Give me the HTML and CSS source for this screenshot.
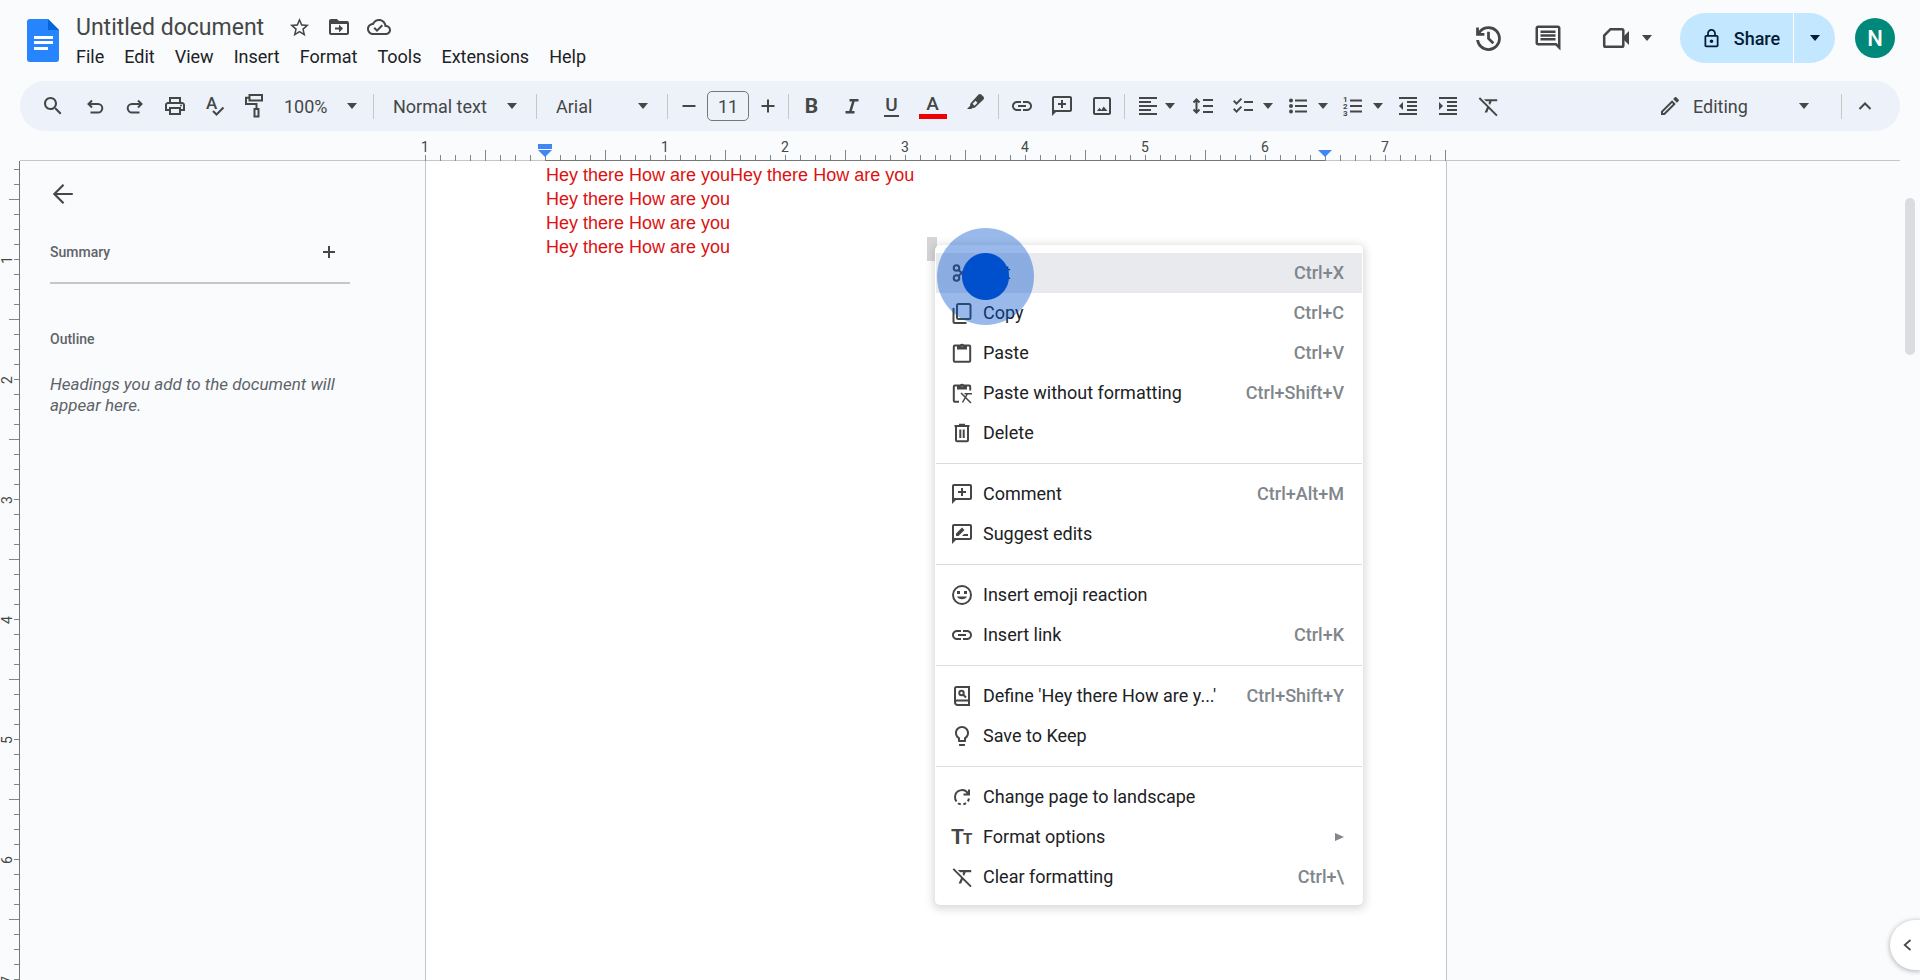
FILE: index.html
```html
<!DOCTYPE html>
<html lang="en">
<head>
  <meta charset="UTF-8">
  <meta name="viewport" content="width=device-width, initial-scale=1.0">
  <title>Untitled document</title>
  <link rel="stylesheet" href="styles.css">
</head>
<body>
  <svg class="defs" aria-hidden="true">
    <symbol id="caret" viewBox="0 0 10 6"><path d="M0 0h10L5 6z"/></symbol>
    <symbol id="comment-add" viewBox="0 0 24 24"><path fill-rule="evenodd" d="M4 2h16c1.1 0 2 .9 2 2v12c0 1.1-.9 2-2 2H6l-4 4V4c0-1.1.9-2 2-2zm0 2v12h16V4zM11 6h2v3h3v2h-3v3h-2v-3H8V9h3z"/></symbol>
    <symbol id="link" viewBox="0 0 24 24"><path d="M3.9 12c0-1.71 1.39-3.1 3.1-3.1h4V7H7c-2.76 0-5 2.24-5 5s2.24 5 5 5h4v-1.9H7c-1.71 0-3.1-1.39-3.1-3.1zM8 13h8v-2H8v2zm9-6h-4v1.9h4c1.71 0 3.1 1.39 3.1 3.1s-1.39 3.1-3.1 3.1h-4V17h4c2.76 0 5-2.24 5-5s-2.24-5-5-5z"/></symbol>
    <symbol id="clear" viewBox="0 0 24 24"><path d="M7.500 4.500H22v2.400h-6l-1.700 4-1.800-1.800.9-2.200h-3.500zM3.300 2.500L22.500 21.700l-1.500 1.500-8.200-8.200-1.700 4H8.300l2.700-5.900L1.800 4z"/></symbol>
  </svg>

  <header class="header">
    <a class="logo" href="#" aria-label="Docs home">
      <svg width="32" height="43" viewBox="0 0 32 43">
        <path d="M3 0h18l11 11v29a3 3 0 0 1-3 3H3a3 3 0 0 1-3-3V3a3 3 0 0 1 3-3z" fill="#2684fc"/>
        <path d="M21 0l11 11H21z" fill="#0066da"/>
        <path d="M7 17h19v3H7zM7 22h19v3H7zM7 28h14v3H7z" fill="#fff"/>
      </svg>
    </a>
    <div class="heading">
      <div class="title-row">
        <h1>Untitled document</h1>
        <button class="title-btn" aria-label="Star"><svg width="23" height="23" viewBox="0 0 24 24"><path d="M22 9.240l-7.190-.620L12 2 9.190 8.630 2 9.240l5.460 4.730L5.820 21 12 17.270 18.180 21l-1.630-7.030L22 9.240zM12 15.400l-3.760 2.270 1-4.280-3.320-2.880 4.380-.38L12 6.100l1.710 4.040 4.380.38-3.320 2.880 1 4.280L12 15.400z"/></svg></button>
        <button class="title-btn" aria-label="Move"><svg width="24" height="24" viewBox="0 0 24 24"><path fill-rule="evenodd" d="M20 6h-8l-2-2H4c-1.100 0-2 .9-2 2v12c0 1.100.9 2 2 2h16c1.100 0 2-.9 2-2V8c0-1.100-.9-2-2-2zM4 9h16v9H4zM12 17.500l4-4-4-4v3H8v2h4z"/></svg></button>
        <button class="title-btn" aria-label="Document status"><svg width="24" height="24" viewBox="0 0 24 24"><path d="M19.350 10.040C18.670 6.590 15.640 4 12 4 9.110 4 6.610 5.640 5.360 8.040 2.350 8.360 0 10.900 0 14c0 3.310 2.690 6 6 6h13c2.760 0 5-2.240 5-5 0-2.640-2.050-4.780-4.650-4.960zM19 18H6c-2.210 0-4-1.790-4-4 0-2.050 1.530-3.760 3.560-3.970l1.070-.11.5-.95C8.080 7.140 9.940 6 12 6c2.620 0 4.880 1.860 5.390 4.430l.3 1.500 1.530.11c1.560.1 2.780 1.410 2.780 2.960 0 1.650-1.350 3-3 3zm-9-3.820l-2.090-2.090L6.500 13.500 10 17l6.010-6.010-1.410-1.410z"/></svg></button>
      </div>
      <nav class="menubar">
        <button>File</button>
        <button>Edit</button>
        <button>View</button>
        <button>Insert</button>
        <button>Format</button>
        <button>Tools</button>
        <button>Extensions</button>
        <button>Help</button>
      </nav>
    </div>
    <div class="actions">
      <button aria-label="Version history"><svg width="33" height="33" viewBox="0 0 24 24"><path d="M12 21q-3.450 0-6.012-2.287T3.050 13H5.100q.35 2.600 2.313 4.300T12 19q2.925 0 4.963-2.037T19 12t-2.037-4.962T12 5q-1.725 0-3.225.8T6.250 8H9v2H3V4h2v2.350q1.275-1.600 3.113-2.475T12 3q1.875 0 3.513.713t2.850 1.924 1.925 2.850T21 12t-.712 3.513-1.925 2.850-2.850 1.925T12 21m2.800-4.800L11 12.400V7h2v4.600l3.200 3.200z"/></svg></button>
      <button aria-label="Comments"><svg width="30" height="30" viewBox="0 0 24 24"><path d="M21.990 4c0-1.100-.89-2-1.990-2H4c-1.100 0-2 .9-2 2v12c0 1.100.9 2 2 2h14l4 4-.01-18zM20 4v13.170L18.830 16H4V4h16zM6 12h12v2H6zm0-3h12v2H6zm0-3h12v2H6z"/></svg></button>
      <button class="meet" aria-label="Join a call"><svg width="28" height="24" viewBox="0 0 28 24"><path d="M8.500 3.200H20a1.300 1.300 0 0 1 1.300 1.300v15a1.300 1.300 0 0 1-1.300 1.300H3.500a1.300 1.300 0 0 1-1.300-1.300V9.500z" fill="none" stroke="currentColor" stroke-width="2.500"/><path d="M21 11l6-6v14l-6-6z"/></svg><svg class="caret" width="10" height="6"><use href="#caret"/></svg></button>
      <div class="share">
        <button class="share-main"><svg width="21" height="21" viewBox="0 0 24 24"><path d="M18 8h-1V6c0-2.760-2.240-5-5-5S7 3.240 7 6v2H6c-1.100 0-2 .9-2 2v10c0 1.100.9 2 2 2h12c1.100 0 2-.9 2-2V10c0-1.100-.9-2-2-2zM9 6c0-1.660 1.340-3 3-3s3 1.340 3 3v2H9V6zm9 14H6V10h12v10zm-6-3c1.100 0 2-.9 2-2s-.9-2-2-2-2 .9-2 2 .9 2 2 2z"/></svg>Share</button>
        <button class="share-more" aria-label="Quick sharing actions"><svg class="caret" width="10" height="6"><use href="#caret"/></svg></button>
      </div>
      <button class="avatar" aria-label="Account">N</button>
    </div>
  </header>

  <div class="toolbar" role="toolbar">
    <button class="btn btn-search" aria-label="Search the menus"><svg width="24" height="24" viewBox="0 0 24 24"><path d="M15.500 14h-.79l-.28-.27C15.410 12.590 16 11.110 16 9.500 16 5.910 13.090 3 9.500 3S3 5.910 3 9.500 5.910 16 9.500 16c1.610 0 3.090-.59 4.230-1.570l.27.28v.79l5 4.990L20.490 19l-4.990-5zm-6 0C7.010 14 5 11.990 5 9.500S7.010 5 9.500 5 14 7.010 14 9.500 11.990 14 9.500 14z"/></svg></button>
    <button class="btn" aria-label="Undo"><svg class="line-icon" width="24" height="24" viewBox="0 0 24 24"><path d="M9 6.500L5.500 10 9 13.500M6 10h9a4.300 4.300 0 0 1 0 8.600H7.500"/></svg></button>
    <button class="btn" aria-label="Redo"><svg class="line-icon" width="24" height="24" viewBox="0 0 24 24"><path d="M15 6.500l3.500 3.500-3.500 3.500M18 10H9a4.300 4.300 0 0 0 0 8.600h7.500"/></svg></button>
    <button class="btn" aria-label="Print"><svg width="24" height="24" viewBox="0 0 24 24"><path d="M19 8h-1V3H6v5H5c-1.660 0-3 1.340-3 3v6h4v4h12v-4h4v-6c0-1.660-1.340-3-3-3zM8 5h8v3H8V5zm8 12v2H8v-4h8v2zm2-2v-2H6v2H4v-4c0-.55.45-1 1-1h14c.55 0 1 .45 1 1v4h-2z"/><circle cx="18" cy="11.500" r="1"/></svg></button>
    <button class="btn" aria-label="Spelling and grammar check"><svg width="24" height="24" viewBox="0 0 24 24"><text class="icon-text" x="3" y="15" font-size="17">A</text><path class="stroke" d="M10 17l3.500 3.500 7-7"/></svg></button>
    <button class="btn" aria-label="Paint format"><svg class="line-icon" width="24" height="26" viewBox="1 0 24 26"><path d="M7.500 2h12.500v5.500H7.500zM7.500 4.700H4v6.300h10.500v4.500M12.500 16h4v7.500h-4z"/></svg></button>
    <label class="pick pick-zoom"><select aria-label="Zoom"><option>100%</option></select><svg class="caret" width="10" height="6"><use href="#caret"/></svg></label>
    <span class="sep"></span>
    <label class="pick pick-style"><select aria-label="Styles"><option>Normal text</option></select><svg class="caret" width="10" height="6"><use href="#caret"/></svg></label>
    <span class="sep"></span>
    <label class="pick pick-font"><select aria-label="Font"><option>Arial</option></select><svg class="caret" width="10" height="6"><use href="#caret"/></svg></label>
    <span class="sep"></span>
    <button class="btn btn-step" aria-label="Decrease font size"><svg class="line-icon" width="24" height="24" viewBox="0 0 24 24"><path d="M5.500 12h13"/></svg></button>
    <input class="font-size" type="text" value="11" aria-label="Font size">
    <button class="btn btn-step" aria-label="Increase font size"><svg class="line-icon" width="24" height="24" viewBox="0 0 24 24"><path d="M5.500 12h13M12 5.500v13"/></svg></button>
    <span class="sep"></span>
    <button class="btn bold" aria-label="Bold">B</button>
    <button class="btn" aria-label="Italic"><svg width="24" height="24" viewBox="0 0 24 24"><path class="stroke italic" d="M9.500 6.300h9M5.500 18.300h9M13.800 6l-3.600 12"/></svg></button>
    <button class="btn" aria-label="Underline"><span class="underline">U</span></button>
    <button class="btn btn-color" aria-label="Text color"><span class="text-color">A</span></button>
    <button class="btn btn-color" aria-label="Highlight color"><svg class="marker" width="24" height="24" viewBox="0 0 24 24"><path fill-rule="evenodd" d="M15.500 3.500q1.500-1 2.800 0l2.200 2.200q1.200 1.300 0 2.800L12 16.500q-1 .8-2.200.3L8.300 18H4l3.300-3.400q-.5-1.300.4-2.300zM9.500 12.700l2 2 3-2.900-2-2z"/></svg></button>
    <span class="sep"></span>
    <button class="btn" aria-label="Insert link"><svg width="24" height="24"><use href="#link"/></svg></button>
    <button class="btn" aria-label="Add comment"><svg width="24" height="24"><use href="#comment-add"/></svg></button>
    <button class="btn" aria-label="Insert image"><svg width="24" height="24" viewBox="0 0 24 24"><path d="M19 5v14H5V5h14m0-2H5c-1.100 0-2 .9-2 2v14c0 1.100.9 2 2 2h14c1.100 0 2-.9 2-2V5c0-1.100-.9-2-2-2zM7 17l2.500-3.200 1.800 2.200 2.400-3.500L17.500 17z"/></svg></button>
    <span class="sep"></span>
    <button class="btn btn-split" aria-label="Align"><svg width="24" height="24" viewBox="0 0 24 24"><path d="M15 15H3v2h12v-2zm0-8H3v2h12V7zM3 13h18v-2H3v2zm0 8h18v-2H3v2zM3 3v2h18V3H3z"/></svg><svg class="caret" width="10" height="6"><use href="#caret"/></svg></button>
    <button class="btn" aria-label="Line spacing"><svg width="24" height="24" viewBox="0 0 24 24"><path class="stroke" d="M5.500 6v12M2.500 8.500l3-3 3 3M2.500 15.500l3 3 3-3"/><path d="M12 5v2h10V5zM12 19h10v-2H12zM12 13h10v-2H12z"/></svg></button>
    <button class="btn btn-split btn-list" aria-label="Checklist"><svg width="24" height="24" viewBox="0 0 24 24"><path d="M22 7h-9v2h9V7zm0 8h-9v2h9v-2zM5.540 11L2 7.460l1.410-1.410 2.120 2.120 4.240-4.240 1.410 1.410L5.540 11zm0 8L2 15.460l1.410-1.410 2.120 2.120 4.240-4.240 1.410 1.410L5.540 19z"/></svg><svg class="caret" width="10" height="6"><use href="#caret"/></svg></button>
    <button class="btn btn-split btn-list" aria-label="Bulleted list"><svg width="24" height="24" viewBox="0 0 24 24"><circle cx="5" cy="6.500" r="2"/><circle cx="5" cy="12" r="2"/><circle cx="5" cy="17.500" r="2"/><path d="M9 5.500h12v2H9zM9 11h12v2H9zM9 16.500h12v2H9z"/></svg><svg class="caret" width="10" height="6"><use href="#caret"/></svg></button>
    <button class="btn btn-split btn-list" aria-label="Numbered list"><svg width="24" height="24" viewBox="0 0 24 24"><g class="digits"><text x="2" y="8">1</text><text x="2" y="15">2</text><text x="2" y="22">3</text></g><path d="M9 5.500h12v2H9zM9 11h12v2H9zM9 16.500h12v2H9z"/></svg><svg class="caret" width="10" height="6"><use href="#caret"/></svg></button>
    <button class="btn" aria-label="Decrease indent"><svg width="24" height="24" viewBox="0 0 24 24"><path d="M11 17h10v-2H11v2zm-8-5l4 4V8l-4 4zm0 9h18v-2H3v2zM3 3v2h18V3H3zm8 6h10V7H11v2zm0 4h10v-2H11v2z"/></svg></button>
    <button class="btn" aria-label="Increase indent"><svg width="24" height="24" viewBox="0 0 24 24"><path d="M3 21h18v-2H3v2zM3 8v8l4-4-4-4zm8 9h10v-2H11v2zM3 3v2h18V3H3zm8 6h10V7H11v2zm0 4h10v-2H11v2z"/></svg></button>
    <button class="btn" aria-label="Clear formatting"><svg width="22" height="22"><use href="#clear"/></svg></button>
    <label class="pick pick-mode"><svg class="pencil" width="24" height="24" viewBox="0 0 24 24"><path d="M14.060 9.020l.92.92L5.920 19H5v-.92l9.060-9.060M17.660 3c-.25 0-.51.1-.7.29l-1.830 1.830 3.750 3.750 1.830-1.830c.39-.39.39-1.020 0-1.410l-2.340-2.340c-.2-.2-.45-.29-.71-.29zm-3.600 3.190L3 17.250V21h3.750L17.810 9.940l-3.750-3.750z"/></svg><select aria-label="Mode"><option>Editing</option></select><svg class="caret" width="10" height="6"><use href="#caret"/></svg></label>
    <span class="sep"></span>
    <button class="btn" aria-label="Hide the menus"><svg class="line-icon" width="24" height="24" viewBox="0 0 24 24"><path d="M6.500 15l5.500-5.500 5.500 5.500"/></svg></button>
  </div>

  <div class="ruler">
    <div class="scale">
      <div class="numbers"><span>1</span><span></span><span>1</span><span>2</span><span>3</span><span>4</span><span>5</span><span>6</span><span>7</span></div>
      <svg class="indent indent-left" width="14" height="13" viewBox="0 0 14 13"><path d="M0 0h14v5H0zM0 6h14l-7 7z"/></svg>
      <svg class="indent indent-right" width="14" height="7" viewBox="0 0 14 7"><path d="M0 0h14L7 7z"/></svg>
    </div>
  </div>

  <main class="workspace">
    <div class="side-ruler">
      <span>1</span><span>2</span><span>3</span><span>4</span><span>5</span><span>6</span><span>7</span>
    </div>

    <aside class="outline">
      <button class="back" aria-label="Close document outline"><svg class="line-icon" width="26" height="26" viewBox="0 0 24 24"><path d="M21 12H4M12.500 3.500L4 12l8.500 8.500"/></svg></button>
      <div class="summary">
        <h2>Summary</h2>
        <button aria-label="Add summary"><svg width="14" height="14" viewBox="0 0 14 14"><path d="M6 1h2v5h5v2H8v5H6V8H1V6h5z"/></svg></button>
      </div>
      <h2>Outline</h2>
      <p>Headings you add to the document will appear here.</p>
    </aside>

    <article class="page">
      <p>Hey there How are youHey there How are you</p>
      <p>Hey there How are you</p>
      <p>Hey there How are you</p>
      <p>Hey there How are you</p>
      <div class="selection"></div>

      <div class="context-menu" role="menu">
        <button class="item active" role="menuitem"><svg width="24" height="24" viewBox="0 0 24 24"><g class="stroke"><circle cx="6.500" cy="7" r="2.800"/><circle cx="6.500" cy="17" r="2.800"/><path d="M8.500 9l12 11M8.500 15l12-11"/></g></svg><span>Cut</span><kbd>Ctrl+X</kbd></button>
        <button class="item" role="menuitem"><svg width="24" height="24" viewBox="0 0 24 24"><path class="stroke" d="M8.500 3h10.500a1.500 1.500 0 0 1 1.500 1.500v12a1.500 1.500 0 0 1-1.500 1.500H8.500A1.500 1.500 0 0 1 7 16.500v-12A1.500 1.500 0 0 1 8.500 3zM3.500 7v13.500a1.500 1.500 0 0 0 1.500 1.500h11.500"/></svg><span>Copy</span><kbd>Ctrl+C</kbd></button>
        <button class="item" role="menuitem"><svg width="24" height="24" viewBox="0 0 24 24"><path class="stroke" d="M4.800 4.500h14.400a1 1 0 0 1 1 1v14.300a1 1 0 0 1-1 1H4.800a1 1 0 0 1-1-1V5.500a1 1 0 0 1 1-1z"/><path fill-rule="evenodd" d="M7 4h3a2.200 2.200 0 0 1 4 0h3v4.500H7zm5 0a.9.9 0 1 0 .01 0z"/></svg><span>Paste</span><kbd>Ctrl+V</kbd></button>
        <button class="item" role="menuitem"><svg width="24" height="24" viewBox="0 0 24 24"><path class="stroke" d="M20.200 9.500v-4a1 1 0 0 0-1-1H4.800a1 1 0 0 0-1 1v14.300a1 1 0 0 0 1 1H9"/><path fill-rule="evenodd" d="M7 4h3a2.200 2.200 0 0 1 4 0h3v4.500H7zm5 0a.9.9 0 1 0 .01 0z"/><path class="thin" d="M11 12l10 10M14.500 12.800H22M17.300 13l-4.800 8.500"/></svg><span>Paste without formatting</span><kbd>Ctrl+Shift+V</kbd></button>
        <button class="item" role="menuitem"><svg width="24" height="24" viewBox="0 0 24 24"><path class="stroke" d="M4.500 5h15M6 5v14.200a1 1 0 0 0 1 1h10a1 1 0 0 0 1-1V5M10.300 8.500v8.500M13.700 8.500v8.500M9 3.800h6"/></svg><span>Delete</span></button>
        <hr>
        <button class="item" role="menuitem"><svg width="24" height="24"><use href="#comment-add"/></svg><span>Comment</span><kbd>Ctrl+Alt+M</kbd></button>
        <button class="item" role="menuitem"><svg width="24" height="24" viewBox="0 0 24 24"><path fill-rule="evenodd" d="M4 2h16c1.100 0 2 .9 2 2v12c0 1.100-.9 2-2 2H6l-4 4V4c0-1.100.9-2 2-2zm0 2v12h16V4zM6 14v-2.500l6-6L14.500 8l-6 6zM12 14l2-2h4v2z"/></svg><span>Suggest edits</span></button>
        <hr>
        <button class="item" role="menuitem"><svg width="24" height="24" viewBox="0 0 24 24"><circle class="stroke" cx="12" cy="12" r="9"/><path d="M7 8h3v3H7zM14 8h3v3h-3zM7 13.500h10a5.300 4 0 0 1-10 0z"/></svg><span>Insert emoji reaction</span></button>
        <button class="item" role="menuitem"><svg width="24" height="24"><use href="#link"/></svg><span>Insert link</span><kbd>Ctrl+K</kbd></button>
        <hr>
        <button class="item" role="menuitem"><svg width="24" height="24" viewBox="0 0 24 24"><path class="stroke" d="M6.500 3H19v18H7.500A2.500 2.500 0 0 1 5 18.500v-14A1.500 1.500 0 0 1 6.500 3zM5 18.500a2 2 0 0 1 2-2h12"/><circle class="stroke" cx="11.500" cy="9" r="2.200"/><path class="stroke" d="M13 10.500l3 3"/></svg><span>Define 'Hey there How are y...'</span><kbd>Ctrl+Shift+Y</kbd></button>
        <button class="item" role="menuitem"><svg width="24" height="24" viewBox="0 0 24 24"><path d="M9 21c0 .55.45 1 1 1h4c.55 0 1-.45 1-1v-1H9v1zm3-19C8.140 2 5 5.140 5 9c0 2.380 1.190 4.470 3 5.740V17c0 .55.45 1 1 1h6c.55 0 1-.45 1-1v-2.260c1.810-1.270 3-3.360 3-5.740 0-3.860-3.140-7-7-7zm2.850 11.100l-.85.6V16h-4v-2.300l-.85-.6C7.800 12.160 7 10.630 7 9c0-2.760 2.240-5 5-5s5 2.240 5 5c0 1.630-.8 3.160-2.150 4.100z"/></svg><span>Save to Keep</span></button>
        <hr>
        <button class="item" role="menuitem"><svg width="24" height="24" viewBox="0 0 24 24"><path class="stroke" d="M18 8.500A7 7 0 0 0 5 12q0 2.500 1.500 4.500M19 4.500V9.500h-5.500"/><path class="stroke" stroke-dasharray="3 2.500" d="M8 18.200a7 7 0 0 0 11-5.700"/></svg><span>Change page to landscape</span></button>
        <button class="item" role="menuitem"><svg width="24" height="24" viewBox="0 0 24 24"><text class="icon-bold" x="1" y="19" font-size="21">T</text><text class="icon-bold" x="13" y="19" font-size="15">T</text></svg><span>Format options</span><svg class="submenu" width="9" height="8" viewBox="0 0 9 8"><path d="M0 0l9 4-9 4z"/></svg></button>
        <button class="item" role="menuitem"><svg width="24" height="24" viewBox="-1 -1 26 26"><use href="#clear" width="24" height="24"/></svg><span>Clear formatting</span><kbd>Ctrl+\</kbd></button>
      </div>
      <div class="click-ring"></div>
    </article>

    <div class="gutter"><div class="thumb"></div></div>
    <button class="side-toggle" aria-label="Show side panel"><svg class="line-icon" width="20" height="20" viewBox="0 0 24 24"><path d="M15 6l-7 6 7 6"/></svg></button>
  </main>
</body>
</html>
```
FILE: styles.css
```css
* {
  box-sizing: border-box;
}

body {
  margin: 0;
  height: 100vh;
  display: flex;
  flex-direction: column;
  overflow: hidden;
  background: #f9fbfd;
  color: #444746;
  font-family: Roboto, "Open Sans", sans-serif;
  font-size: 18px;
}

h1, h2, p {
  margin: 0;
}

button {
  display: flex;
  align-items: center;
  justify-content: center;
  border: 0;
  padding: 0;
  background: none;
  color: inherit;
  font: inherit;
  cursor: pointer;
}

svg {
  flex: none;
  fill: currentColor;
}

.defs {
  position: absolute;
  width: 0;
  height: 0;
}

.line-icon,
.stroke {
  fill: none;
  stroke: currentColor;
  stroke-width: 2;
}

.thin {
  fill: none;
  stroke: currentColor;
  stroke-width: 1.5;
}

.italic {
  stroke-width: 2.6;
}

.icon-text {
  font-weight: 500;
}

.icon-bold {
  font-weight: 700;
}

.digits {
  font-size: 8px;
  font-weight: 700;
}

/* header */
.header {
  flex: none;
  display: flex;
  height: 81px;
}

.logo {
  margin: 19px 17px 0 27px;
}

.heading {
  padding-top: 11px;
}

.title-row {
  display: flex;
  align-items: center;
  height: 32px;
}

h1 {
  margin-right: 15px;
  font-size: 23px;
  font-weight: 400;
}

.title-btn {
  width: 40px;
  height: 32px;
}

.menubar {
  display: flex;
  gap: 20px;
  height: 27px;
  color: #202124;
}

.actions {
  display: flex;
  align-items: center;
  gap: 28px;
  height: 76px;
  margin-left: auto;
  padding-right: 25px;
}

.meet {
  gap: 12px;
  margin-left: 11px;
}

.share {
  display: flex;
  height: 50px;
  border-radius: 25px;
  overflow: hidden;
  background: #c2e7ff;
  color: #001d35;
  font-weight: 500;
}

.share-main {
  width: 113px;
  gap: 12px;
  padding-left: 8px;
}

.share-more {
  width: 42px;
  border-left: 1px solid #fff;
}

.avatar {
  width: 40px;
  height: 40px;
  margin-left: -8px;
  border-radius: 50%;
  background: #00897b;
  color: #fff;
  font-size: 22px;
  font-weight: 500;
}

/* toolbar */
.toolbar {
  flex: none;
  display: flex;
  align-items: center;
  gap: 1px;
  height: 50px;
  margin: 0 20px;
  padding: 0 16px 0 12px;
  border-radius: 25px;
  background: #edf2fa;
}

.btn {
  flex: none;
  width: 39px;
  height: 36px;
}

.btn-search {
  width: 42px;
}

.btn-step {
  width: 35px;
}

.btn-color {
  width: 41px;
}

.btn-split {
  width: 54px;
  gap: 5px;
  justify-content: flex-start;
  padding-left: 8px;
}

.btn-list {
  gap: 8px;
}

.bold {
  font-size: 21px;
  font-weight: 700;
}

.underline {
  width: 15px;
  border-bottom: 2px solid;
  font-size: 19px;
  font-weight: 500;
  line-height: 20px;
}

.text-color {
  width: 28px;
  border-bottom: 5px solid #f00000;
  font-size: 19px;
  font-weight: 500;
  line-height: 21px;
}

.marker {
  margin-bottom: 6px;
}

.sep {
  flex: none;
  width: 1px;
  height: 25px;
  margin: 0 2px;
  background: #c7c7c7;
}

.pick {
  display: grid;
  align-items: center;
  height: 36px;
}

.pick select {
  grid-area: 1 / 1;
  width: 100%;
  height: 36px;
  border: 0;
  padding: 0 0 0 16px;
  background: none;
  color: inherit;
  font: inherit;
  appearance: none;
}

.pick .caret {
  grid-area: 1 / 1;
  justify-self: end;
  margin-right: 16px;
  pointer-events: none;
}

.pick-zoom {
  width: 95px;
}

.pick-zoom select {
  padding-left: 9px;
}

.pick-zoom .caret {
  margin-right: 13px;
}

.pick-style {
  width: 156px;
}

.pick-font {
  width: 124px;
}

.pick-mode {
  width: 188px;
  margin-left: auto;
}

.pick-mode select {
  padding-left: 43px;
}

.pick-mode .caret {
  margin-right: 29px;
}

.pencil {
  grid-area: 1 / 1;
  margin-left: 8px;
}

.font-size {
  width: 42px;
  height: 30px;
  border: 1px solid #747775;
  border-radius: 5px;
  padding: 0;
  background: none;
  color: inherit;
  font: inherit;
  text-align: center;
}

/* rulers: 120px per inch, ticks every 1/8 */
.ruler {
  flex: none;
  height: 30px;
  margin: 0 20px;
  padding-left: 405px;
  background: linear-gradient(#c4c7c5, #c4c7c5) 0 100% / 100% 1px no-repeat;
}

.scale {
  position: relative;
  width: 1021px;
  height: 30px;
  background:
    linear-gradient(#747775, #747775) 120px 100% / 780px 1px no-repeat,
    linear-gradient(90deg, #80868b 1px, transparent 1px) 0 100% / 15px 6px repeat-x,
    linear-gradient(90deg, #80868b 1px, transparent 1px) 60px 100% / 120px 11px repeat-x;
}

.numbers {
  display: flex;
  width: 1080px;
  margin-left: -60px;
  font-size: 14px;
  line-height: 32px;
}

.numbers span {
  width: 120px;
  text-align: center;
}

.indent {
  position: absolute;
  fill: #4285f4;
}

.indent-left {
  left: 113px;
  top: 13px;
}

.indent-right {
  left: 893px;
  top: 19px;
}

.workspace {
  position: relative;
  flex: 1;
  display: flex;
  min-height: 0;
  overflow: hidden;
}

.side-ruler {
  flex: none;
  width: 20px;
  padding: 39px 5px 0 0;
  border-right: 1px solid #747775;
  background:
    linear-gradient(#80868b 1px, transparent 1px) 100% 8px / 5px 15px repeat-y,
    linear-gradient(#80868b 1px, transparent 1px) 100% 38px / 10px 120px repeat-y;
  font-size: 14px;
}

.side-ruler span {
  display: block;
  height: 120px;
  line-height: 14px;
  text-align: center;
  writing-mode: vertical-rl;
  transform: rotate(180deg);
}

/* outline panel */
.outline {
  flex: none;
  width: 405px;
  padding: 20px 75px 0 30px;
  color: #5f6368;
}

.back {
  height: 26px;
  color: #444746;
}

.summary {
  display: flex;
  align-items: center;
  justify-content: space-between;
  height: 62px;
  margin: 15px 0 45px;
  border-bottom: 2px solid #c4c7c5;
}

.summary button {
  margin-right: 14px;
  color: #444746;
}

h2 {
  font-size: 14px;
  font-weight: 500;
  line-height: 20px;
}

.outline p {
  margin-top: 25px;
  font-size: 17px;
  font-style: italic;
  line-height: 21px;
}

/* document */
.page {
  position: relative;
  flex: none;
  width: 1022px;
  padding: 2px 120px 0;
  border: 1px solid #c4c7c5;
  border-width: 0 1px;
  background: #fff;
  color: #dd1111;
  font-family: "Liberation Sans", Arial, sans-serif;
  line-height: 24px;
}

.selection {
  position: absolute;
  left: 501px;
  top: 76px;
  width: 10px;
  height: 24px;
  background: #d6d6d6;
}

.context-menu {
  position: absolute;
  left: 509px;
  top: 84px;
  width: 428px;
  padding: 8px 1px;
  border-radius: 5px;
  background: #fff;
  box-shadow: 0 2px 8px 2px rgba(60, 64, 67, .2);
  color: #202124;
  font-family: Roboto, "Open Sans", sans-serif;
}

.item {
  width: 100%;
  height: 40px;
  gap: 9px;
  padding: 0 18px 0 14px;
}

.item.active {
  background: #e8eaed;
}

.item svg {
  color: #444746;
}

.item span {
  flex: 1;
  text-align: left;
  white-space: nowrap;
}

.item kbd {
  color: #80868b;
  font-family: inherit;
  font-weight: 500;
}

.item .submenu {
  color: #80868b;
}

.context-menu hr {
  margin: 10px 0;
  border: 0;
  border-top: 1px solid #dadce0;
}

.click-ring {
  position: absolute;
  left: 511px;
  top: 67px;
  width: 97px;
  height: 97px;
  border-radius: 50%;
  background: radial-gradient(circle, #0050cd 23px, rgba(0, 80, 205, .4) 24px);
}

.gutter {
  flex: none;
  width: 20px;
  margin-left: auto;
  padding: 37px 5px 0;
}

.thumb {
  height: 157px;
  border-radius: 5px;
  background: #dadce0;
}

.side-toggle {
  position: absolute;
  right: 0;
  bottom: 10px;
  width: 30px;
  height: 50px;
  padding-left: 5px;
  border-radius: 25px 0 0 25px;
  background: #fff;
  box-shadow: 0 1px 4px 1px rgba(60, 64, 67, .3);
}
```
